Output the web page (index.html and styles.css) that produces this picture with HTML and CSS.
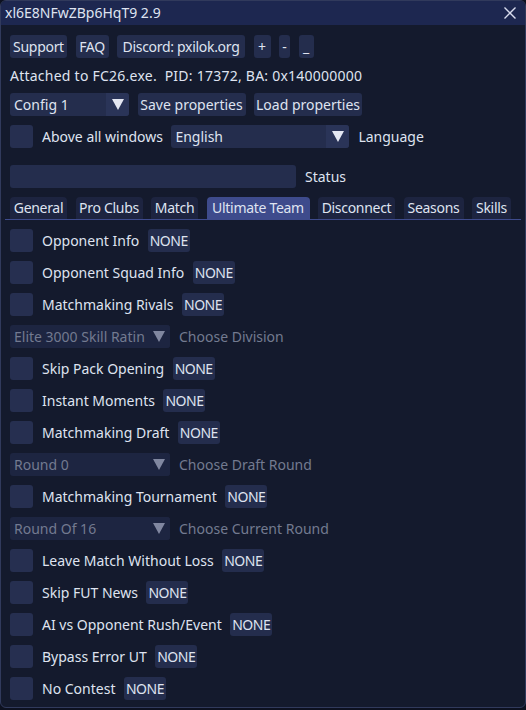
FILE: index.html
```html
<!DOCTYPE html>
<html>
<head>
<meta charset="utf-8">
<link rel="stylesheet" href="styles.css">
</head>
<body>
<div class="window">
  <div class="titlebar">
    <span class="title">xl6E8NFwZBp6HqT9 2.9</span>
    <svg class="close" width="14" height="14" viewBox="0 0 14 14"><path d="M1.5 1.5 L12.5 12.5 M12.5 1.5 L1.5 12.5" stroke="#d8dcee" stroke-width="1.4" fill="none"/></svg>
  </div>
  <div class="content">
    <div class="row">
      <span class="btn b-support">Support</span>
      <span class="btn b-faq">FAQ</span>
      <span class="btn b-discord">Discord: pxilok.org</span>
      <span class="btn b-plus">+</span>
      <span class="btn b-minus">-</span>
      <span class="btn b-under">_</span>
    </div>
    <div class="textline">Attached to FC26.exe.&nbsp; PID: 17372, BA: 0x140000000</div>
    <div class="row">
      <span class="combo w119"><span class="val">Config 1</span><span class="arrow"><i></i></span></span>
      <span class="btn b-prop">Save properties</span>
      <span class="btn b-prop">Load properties</span>
    </div>
    <div class="row">
      <span class="check"></span>
      <span class="label">Above all windows</span>
      <span class="combo w178"><span class="val">English</span><span class="arrow"><i></i></span></span>
      <span class="label">Language</span>
    </div>
    <div class="row status-row">
      <span class="input"></span>
      <span class="label">Status</span>
    </div>
    <div class="tabbar">
      <span class="tab t-general">General</span>
      <span class="tab t-pro">Pro Clubs</span>
      <span class="tab t-match">Match</span>
      <span class="tab t-ut active">Ultimate Team</span>
      <span class="tab t-disc">Disconnect</span>
      <span class="tab t-seasons">Seasons</span>
      <span class="tab t-skills">Skills</span>
    </div>
    <div class="list">
      <div class="row"><span class="check"></span><span class="label">Opponent Info</span><span class="btn none">NONE</span></div>
      <div class="row"><span class="check"></span><span class="label">Opponent Squad Info</span><span class="btn none">NONE</span></div>
      <div class="row"><span class="check"></span><span class="label">Matchmaking Rivals</span><span class="btn none">NONE</span></div>
      <div class="row"><span class="combo w160 off"><span class="val">Elite 3000 Skill Ratin</span><span class="arrow"><i></i></span></span><span class="label dim">Choose Division</span></div>
      <div class="row"><span class="check"></span><span class="label">Skip Pack Opening</span><span class="btn none">NONE</span></div>
      <div class="row"><span class="check"></span><span class="label">Instant Moments</span><span class="btn none">NONE</span></div>
      <div class="row"><span class="check"></span><span class="label">Matchmaking Draft</span><span class="btn none">NONE</span></div>
      <div class="row"><span class="combo w160 off"><span class="val">Round 0</span><span class="arrow"><i></i></span></span><span class="label dim">Choose Draft Round</span></div>
      <div class="row"><span class="check"></span><span class="label">Matchmaking Tournament</span><span class="btn none">NONE</span></div>
      <div class="row"><span class="combo w160 off"><span class="val">Round Of 16</span><span class="arrow"><i></i></span></span><span class="label dim">Choose Current Round</span></div>
      <div class="row"><span class="check"></span><span class="label">Leave Match Without Loss</span><span class="btn none">NONE</span></div>
      <div class="row"><span class="check"></span><span class="label">Skip FUT News</span><span class="btn none">NONE</span></div>
      <div class="row"><span class="check"></span><span class="label">AI vs Opponent Rush/Event</span><span class="btn none">NONE</span></div>
      <div class="row"><span class="check"></span><span class="label">Bypass Error UT</span><span class="btn none">NONE</span></div>
      <div class="row"><span class="check"></span><span class="label">No Contest</span><span class="btn none">NONE</span></div>
    </div>
  </div>
</div>
</body>
</html>
```
FILE: styles.css
```css
html, body {
  margin: 0;
  padding: 0;
  background: #0d1120;
}

body {
  font-family: "Noto Sans", "Open Sans", sans-serif;
  font-size: 14px;
  color: #dfe3f0;
  width: 526px;
  height: 710px;
  overflow: hidden;
}

.window {
  box-sizing: border-box;
  width: 526px;
  height: 708px;
  background: #141a2d;
  border: 1px solid #313a5c;
  border-radius: 6px;
  overflow: hidden;
}

.titlebar {
  height: 24px;
  background: #1d2750;
  display: flex;
  align-items: center;
  justify-content: space-between;
  padding: 0 8px 0 4px;
}

.title {
  line-height: 24px;
}

.close {
  display: block;
}

.content {
  padding: 10px 9px 0 9px;
  display: flex;
  flex-direction: column;
  gap: 9px;
}

.row {
  display: flex;
  align-items: center;
  gap: 8.5px;
  height: 23px;
  white-space: nowrap;
}

.status-row {
  margin-top: 8px;
}

.textline {
  height: 17px;
  line-height: 17px;
  white-space: nowrap;
  letter-spacing: 0.24px;
}

.btn {
  box-sizing: border-box;
  height: 23px;
  line-height: 23px;
  padding: 0 4px;
  background: #242d4d;
  border-radius: 3px;
  text-align: center;
  flex: none;
}

/* fixed button widths */
.b-support { width: 57px; padding: 0; letter-spacing: -0.3px; }
.b-faq { width: 33px; padding: 0; letter-spacing: -0.3px; }
.b-discord { width: 128px; padding: 0; letter-spacing: -0.3px; }
.b-plus { width: 17px; padding: 0; }
.b-minus { width: 11px; padding: 0; }
.b-under { width: 15px; padding: 0; }
.b-prop { width: 108px; padding: 0; }

.none {
  width: 42px;
  padding: 0;
  letter-spacing: -0.5px;
}

.label {
  line-height: 23px;
  margin-left: 0.5px;
}

.dim {
  color: #737a90;
}

.check {
  width: 23px;
  height: 23px;
  background: #262f50;
  border-radius: 3px;
  flex: none;
}

.combo {
  display: flex;
  height: 23px;
  background: #242d4d;
  border-radius: 3px;
  overflow: hidden;
  flex: none;
}

.combo .val {
  flex: 1;
  padding: 0 4px;
  line-height: 23px;
  overflow: hidden;
  white-space: nowrap;
}

.combo .arrow {
  width: 23px;
  flex: none;
  background: #2a3458;
  display: flex;
  align-items: center;
  justify-content: center;
}

.combo .arrow i {
  width: 0;
  height: 0;
  border-left: 6px solid transparent;
  border-right: 6px solid transparent;
  border-top: 11px solid #e4e7f2;
}

.combo.off {
  background: #1d2541;
}

.combo.off .val {
  color: #737a90;
}

.combo.off .arrow {
  background: #1d2541;
}

.combo.off .arrow i {
  border-top-color: #8087a0;
}

.w119 { width: 119px; }
.w178 { width: 178px; }
.w160 { width: 160px; }

.input {
  width: 286px;
  height: 23px;
  background: #242d4d;
  border-radius: 3px;
  flex: none;
}

.tabbar {
  display: flex;
  gap: 8.5px;
  height: 22px;
  margin: 0 -5px;
  padding: 0 5px;
  border-bottom: 1px solid #3e4b8c;
  white-space: nowrap;
}

.tab {
  box-sizing: border-box;
  height: 22px;
  line-height: 22px;
  background: #1d2440;
  border-radius: 4px 4px 0 0;
  text-align: center;
  letter-spacing: -0.3px;
  flex: none;
}

.t-general { width: 57px; }
.t-pro { width: 67px; }
.t-match { width: 47px; }
.t-ut { width: 103px; }
.t-disc { width: 77px; }
.t-seasons { width: 60px; }
.t-skills { width: 39px; }

.tab.active {
  background: #3e4b8c;
}

.list {
  display: flex;
  flex-direction: column;
  gap: 9px;
}
```
